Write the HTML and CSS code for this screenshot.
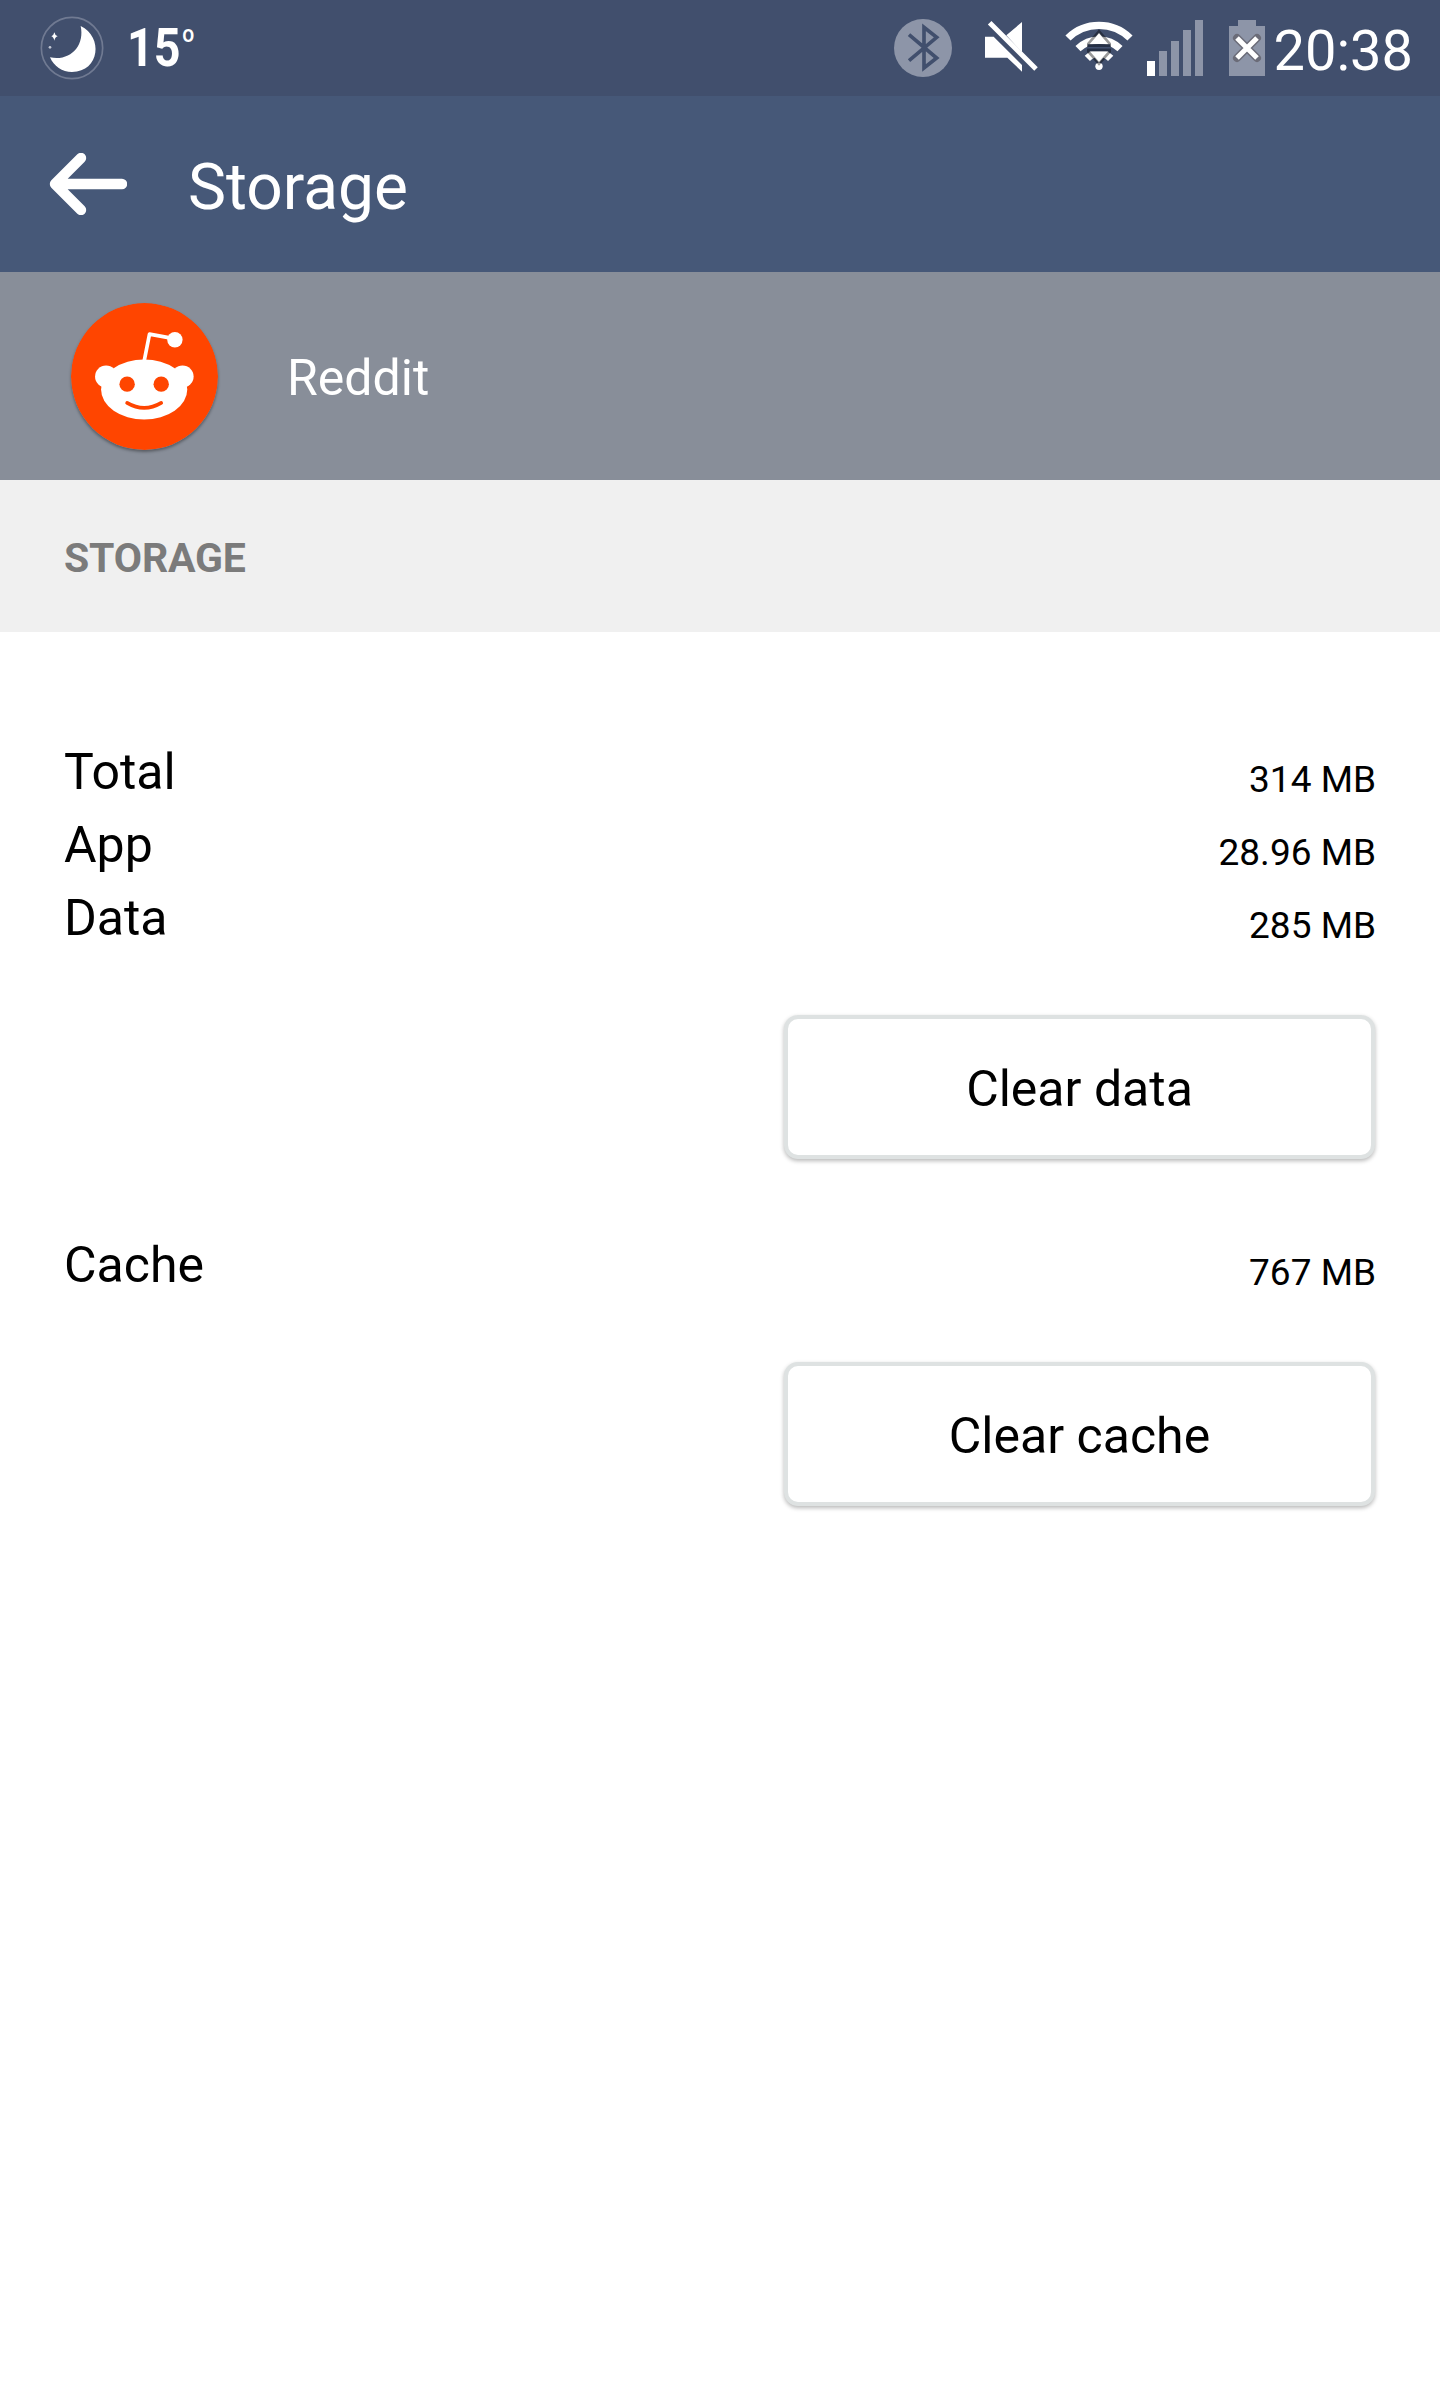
FILE: index.html
```html
<!DOCTYPE html>
<html lang="en">
<head>
<meta charset="utf-8">
<title>Storage</title>
<link rel="stylesheet" href="styles.css">
</head>
<body>
<header class="status">
  <svg class="moon" viewBox="0 0 192 192"><circle cx="96" cy="96" r="92" fill="none" stroke="#707a92" stroke-width="5"/><path d="M122 30C190 62 180 167 96 168C67 168 41 151 30 124C90 137 135 90 122 30Z" fill="#fff"/><path d="M43 49Q45 59 53 61Q45 63 43 74Q41 63 34 61Q41 59 43 49Z" fill="#fff"/><circle cx="30" cy="94" r="4" fill="#c5cad5"/></svg>
  <div class="weather"><span class="temp">15</span><span class="degree">o</span></div>
  <div class="tray">
    <svg class="bluetooth" viewBox="0 0 174 174"><circle cx="87" cy="87" r="87" fill="#8d95a8"/><path d="M45 47L128 117L90 147V25L128 55L45 125" fill="none" stroke="#414f6d" stroke-width="11"/></svg>
    <svg class="mute" viewBox="0 0 162 156"><path d="M3 50H29L114 135V155L70 113H3ZM67 46L114 6V97Z" fill="#fff"/><path d="M17 8L156 147" stroke="#fff" stroke-width="15"/></svg>
    <svg class="wifi" viewBox="0 0 204 150"><g fill="none" stroke="#fff" stroke-width="22"><path d="M9 51A133 133 0 0 1 195 51"/><path d="M39 83A91 91 0 0 1 165 83"/><path d="M67 112A49 49 0 0 1 137 112"/></g><circle cx="102" cy="136" r="11" fill="#fff"/><path d="M102 35L73 69H131ZM73 91H131L102 126Z" fill="#fff"/><path d="M102 31L70 68V74H134V68ZM70 87H134V92L102 128L70 92Z" fill="none" stroke="#000" stroke-opacity=".4" stroke-width="8"/><path d="M68 74H136M68 87H136" stroke="#252f45" stroke-width="8"/></svg>
    <svg class="signal" viewBox="0 0 56 56"><path d="M0 41h8v15H0z" fill="#fff"/><path d="M12 31h8v25h-8zM24 21h8v35h-8zM36 10h8v46h-8zM48 0h8v56h-8z" fill="#8d95a8"/></svg>
    <svg class="battery" viewBox="0 0 36 56"><path d="M9 0h18v6h9v50H0V6h9z" fill="#8d95a8"/><path d="M8 18L28 38M28 18L8 38" stroke="#6b6c78" stroke-width="8" stroke-linecap="round"/><path d="M8 18L28 38M28 18L8 38" stroke="#fff" stroke-width="5"/></svg>
    <time class="clock">20:38</time>
  </div>
</header>
<nav class="appbar">
  <svg class="back" viewBox="0 0 78 62"><path d="M32 5L6 31L32 57M8 31H73" fill="none" stroke="#fff" stroke-width="10.4" stroke-linecap="round" stroke-linejoin="round"/></svg>
  <h1 class="title">Storage</h1>
</nav>
<section class="app">
  <svg class="logo" viewBox="0 0 440 440"><circle cx="220" cy="220" r="220" fill="#ff4500"/><g fill="#fff"><ellipse cx="219" cy="259" rx="129" ry="90"/><circle cx="105" cy="220" r="33"/><circle cx="334" cy="220" r="33"/><circle cx="311" cy="110" r="23"/></g><path d="M219 174L235 93L300 105" fill="none" stroke="#fff" stroke-width="11" stroke-linejoin="round"/><circle cx="168" cy="243" r="23" fill="#ff4500"/><circle cx="270" cy="243" r="23" fill="#ff4500"/><path d="M168 299Q219 329 270 299" fill="none" stroke="#ff4500" stroke-width="11" stroke-linecap="round"/></svg>
  <span class="name">Reddit</span>
</section>
<h2 class="section">STORAGE</h2>
<main class="panel">
  <div class="row"><span>Total</span><span class="value">314 MB</span></div>
  <div class="row"><span>App</span><span class="value">28.96 MB</span></div>
  <div class="row"><span>Data</span><span class="value">285 MB</span></div>
  <button class="action">Clear data</button>
  <div class="row"><span>Cache</span><span class="value">767 MB</span></div>
  <button class="action">Clear cache</button>
</main>
</body>
</html>
```
FILE: styles.css
```css
* { box-sizing: border-box; }
body {
  margin: 0;
  min-height: 2392px;
  background: #fff;
  color: #000;
  font: 50px/73px Roboto, sans-serif;
}
svg { display: block; flex: none; }
.status {
  display: flex;
  height: 96px;
  padding: 0 27px 0 40px;
  background: #414f6d;
  color: #fff;
}
.moon { width: 64px; height: 64px; margin-top: 16px; }
.weather {
  display: flex;
  margin-left: 23px;
  transform: scaleX(.88);
  transform-origin: left;
}
.temp { font-size: 53px; font-weight: 700; line-height: 97px; }
.degree { margin-left: 2px; font-size: 24px; font-weight: 500; line-height: 68px; }
.tray { display: flex; margin-left: auto; }
.bluetooth { width: 58px; height: 58px; margin: 19px 32px 0 0; }
.mute { width: 54px; height: 52px; margin: 20px 27px 0 0; }
.wifi { width: 68px; height: 50px; margin: 21px 14px 0 0; }
.signal { width: 56px; height: 56px; margin: 20px 26px 0 0; }
.battery { width: 36px; height: 56px; margin: 20px 9px 0 0; }
.clock { font-size: 56px; line-height: 102px; }
.appbar {
  display: flex;
  height: 176px;
  padding-left: 49px;
  background: #465878;
  color: #fff;
}
.back { width: 78px; height: 62px; margin: 57px 61px 0 0; }
.title { margin: 0; font-size: 64px; font-weight: 400; line-height: 184px; }
.app {
  display: flex;
  height: 208px;
  padding-left: 71px;
  background: #888e99;
  color: #fff;
}
.logo {
  width: 147px;
  height: 147px;
  margin: 31px 69px 0 0;
  border-radius: 50%;
  box-shadow: 0 2px 3px rgba(0, 0, 0, .35);
}
.name { line-height: 212px; }
.section {
  height: 152px;
  margin: 0;
  padding-left: 64px;
  background: #f0f0f0;
  color: #7b7b7b;
  font-size: 41px;
  letter-spacing: -.15px;
  line-height: 156px;
}
.panel { display: flex; flex-direction: column; padding: 104px 64px 0; }
.row { display: flex; align-items: flex-end; justify-content: space-between; }
.value { font-size: 37px; line-height: 59px; }
.action {
  align-self: flex-end;
  width: 591px;
  height: 144px;
  margin: 60px 1px 70px 0;
  padding: 4px 0 0;
  border: 4px solid #dee2e2;
  border-radius: 14px;
  background: #fff;
  box-shadow: 0 2px 4px rgba(0, 0, 0, .28);
  color: #000;
  font: inherit;
}
```
